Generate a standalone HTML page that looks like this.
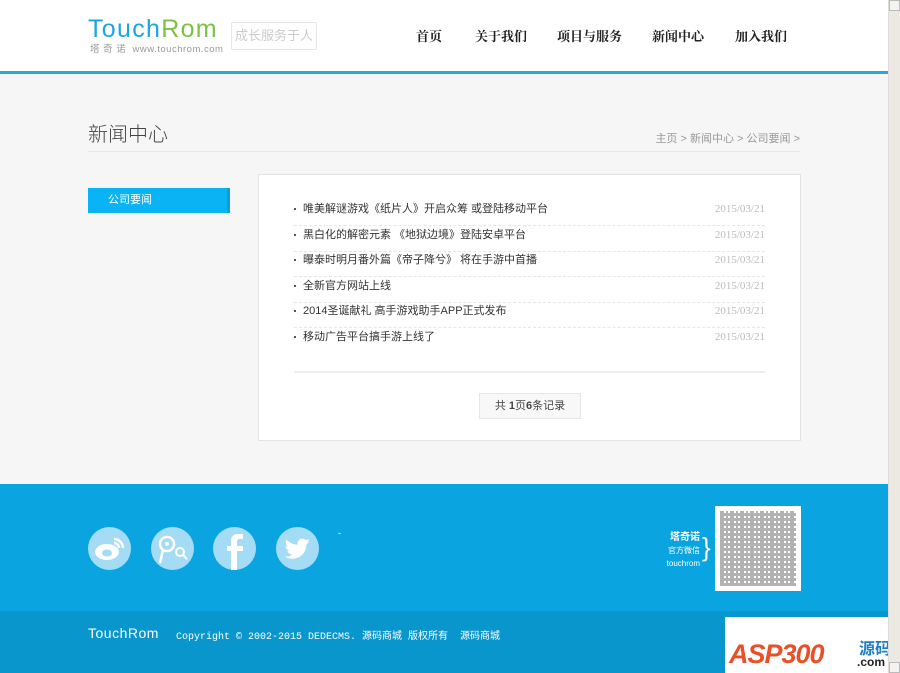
<!DOCTYPE html>
<html><head><meta charset="utf-8"><style>
*{margin:0;padding:0;box-sizing:border-box}
body{width:900px;height:673px;overflow:hidden;background:#f6f6f6;font-family:"Liberation Sans","Noto Sans CJK SC",sans-serif;position:relative}
.page{position:absolute;left:0;top:0;width:888px;height:673px}
.hdr{position:absolute;left:0;top:0;width:888px;background:#fff;border-bottom:3px solid #29a8dc;height:74px}
.logo{position:absolute;left:88px;top:16px;font-size:25px;letter-spacing:1.3px;line-height:26px}
.logo .a{color:#1aa6e0}.logo .b{color:#7cc242}
.sub{position:absolute;left:90px;top:41px;font-size:9.5px;color:#999;letter-spacing:0.5px}
.slogan{position:absolute;left:231px;top:22px;width:86px;height:28px;border:1px solid #e6e6e6;border-radius:2px;color:#ccc;font-size:13px;line-height:26px;text-align:center}
.nav{position:absolute;top:26px;font-size:13px;font-weight:bold;color:#222;font-family:"Noto Serif CJK SC",serif}
.title{position:absolute;left:88px;top:118px;font-size:20px;color:#444;font-weight:300}
.bc{position:absolute;right:88px;top:130px;font-size:11px;color:#999}
.hl{position:absolute;left:88px;top:151px;width:712px;height:1px;background:#e6e6e6}
.side{position:absolute;left:88px;top:188px;width:142px;height:25px;background:#0ab4f4;border-right:3px solid #0a9fd6;color:#fff;font-size:11px;line-height:25px;padding-left:20px}
.box{position:absolute;left:258px;top:174px;width:543px;height:267px;background:#fff;border:1px solid #e3e3e3}
.li{position:absolute;left:35px;width:471px;height:26px;border-bottom:1px dashed #e6e6e6;font-size:11px;color:#333;line-height:18px}
.li span{position:absolute;right:0;top:0;color:#bbb;font-family:"Liberation Serif",serif}
.li:before{content:"";position:absolute;left:0;top:8px;width:2px;height:2px;background:#555}
.li b{font-weight:normal;margin-left:9px}
.sl{position:absolute;left:35px;top:196px;width:471px;height:2px;background:#eee}
.pg{position:absolute;left:220px;top:218px;width:102px;height:26px;border:1px solid #e6e6e6;background:#f8f8f8;font-size:11px;color:#444;line-height:24px;text-align:center}
.ft{position:absolute;left:0;top:484px;width:888px;height:127px;background:#0aa4e0}
.ft2{position:absolute;left:0;top:611px;width:888px;height:62px;background:#0896cd}
.ic{position:absolute;top:527px;width:43px;height:43px;border-radius:50%;background:#a5dcf5}
.cp{position:absolute;left:176px;top:627px;font-size:10px;color:#fff;font-family:"Liberation Mono","Noto Sans CJK SC",monospace}
.sb{position:absolute;left:888px;top:0;width:12px;height:673px;background:#ece9e3;border-left:1px solid #ddd}
.sb i{position:absolute;left:0;width:11px;height:11px;background:#f4f3ee;border:1px solid #bbb}
.qr{position:absolute;left:715px;top:506px;width:86px;height:85px;background:#fff;padding:5px}
.qr div{width:76px;height:75px;background:repeating-linear-gradient(90deg,#aaa 0 4px,#fff 4px 6px,#aaa 6px 8px,#fff 8px 10px),repeating-linear-gradient(0deg,#aaa 0 3px,#fff 3px 5px);background-blend-mode:darken;opacity:.9}
</style></head><body><div class="page">
<div class="hdr">
<div class="logo"><span class="a">Touch</span><span class="b">Rom</span></div>
<div class="sub">塔 奇 诺 &nbsp;www.touchrom.com</div>
<div class="slogan">成长服务于人</div>
<div class="nav" style="left:416px">首页</div>
<div class="nav" style="left:475px">关于我们</div>
<div class="nav" style="left:557px">项目与服务</div>
<div class="nav" style="left:652px">新闻中心</div>
<div class="nav" style="left:735px">加入我们</div>
</div>
<div class="title">新闻中心</div>
<div class="bc">主页 &gt; 新闻中心 &gt; 公司要闻 &gt;</div>
<div class="hl"></div>
<div class="side">公司要闻</div>
<div class="box">
<div class="li" style="top:25px"><b>唯美解谜游戏《纸片人》开启众筹 或登陆移动平台</b><span>2015/03/21</span></div>
<div class="li" style="top:51px"><b>黑白化的解密元素 《地狱边境》登陆安卓平台</b><span>2015/03/21</span></div>
<div class="li" style="top:76px"><b>曝泰时明月番外篇《帝子降兮》 将在手游中首播</b><span>2015/03/21</span></div>
<div class="li" style="top:102px"><b>全新官方网站上线</b><span>2015/03/21</span></div>
<div class="li" style="top:127px"><b>2014圣诞献礼 高手游戏助手APP正式发布</b><span>2015/03/21</span></div>
<div class="li" style="top:153px;border:none"><b>移动广告平台搞手游上线了</b><span>2015/03/21</span></div>
<div class="sl"></div>
<div class="pg">共 <b>1</b>页<b>6</b>条记录</div>
</div>
<div class="ft"></div>
<div class="ic" style="left:88px"><svg width="43" height="43"><ellipse cx="19" cy="25" rx="12" ry="8" fill="#fff"/><ellipse cx="19" cy="26" rx="5" ry="3.5" fill="#a5dcf5"/><path d="M26 12a9 9 0 0 1 9 9M26 16a5 5 0 0 1 5 5" stroke="#fff" stroke-width="2.5" fill="none"/></svg></div>
<div class="ic" style="left:151px"><svg width="43" height="43"><circle cx="16" cy="17" r="7" stroke="#fff" stroke-width="2.5" fill="none"/><circle cx="16" cy="17" r="2" fill="#fff"/><path d="M12 23l-3 13" stroke="#fff" stroke-width="2.5"/><circle cx="29" cy="25" r="4" stroke="#fff" stroke-width="2" fill="none"/><path d="M32 28l4 4" stroke="#fff" stroke-width="2"/></svg></div>
<div class="ic" style="left:213px"><svg width="43" height="43"><path d="M24 43V24h6v-5h-6v-4c0-2 1-3 3-3h3V7h-5c-5 0-7 3-7 7v5h-4v5h4v19z" fill="#fff"/></svg></div>
<div class="ic" style="left:276px"><svg width="43" height="43"><path d="M34 14c-1 .5-2 .8-3 1 1-.7 2-1.700 2-3-1 .6-2 1-3 1.200a5 5 0 0 0-8.500 4.500C17 17.500 13 15.500 10.500 12.500c-1.500 2.500-.5 5.500 1.500 7-.8 0-1.600-.3-2.300-.6 0 2.500 1.800 4.500 4 5-.7.2-1.500.2-2.200.1.6 2 2.500 3.400 4.600 3.500-2 1.600-4.600 2.400-7.300 2.100 2.200 1.400 4.800 2.200 7.600 2.200 9 0 14-7.500 14-14v-.6c1-.7 1.800-1.500 2.500-2.500z" fill="#fff"/></svg></div>
<div style="position:absolute;left:338px;top:528px;color:#fff;font-size:9px">-</div>
<div style="position:absolute;left:650px;top:531px;width:50px;text-align:right;color:#fff;font-size:8px;line-height:13px"><b style="font-size:10px">塔奇诺</b><br>官方微信<br>touchrom</div>
<div style="position:absolute;left:702px;top:532px;color:#fff;font-size:26px;line-height:30px;font-weight:100">}</div>
<div class="qr"><div></div></div>
<div class="ft2"></div>
<div style="position:absolute;left:88px;top:625px;color:#fff;font-size:14px;letter-spacing:.5px">TouchRom</div>
<div class="cp">Copyright © 2002-2015 DEDECMS. 源码商城 版权所有 &nbsp;源码商城</div>
<div style="position:absolute;left:725px;top:617px;width:170px;height:56px;background:#fff;overflow:hidden"><div style="position:absolute;left:4px;top:22px;font:italic bold 27px 'Liberation Sans',sans-serif;color:#e8502a;letter-spacing:-1px">ASP300</div><div style="position:absolute;left:134px;top:18px;font:bold 16px 'Noto Sans CJK SC',sans-serif;color:#1f7fc6">源码</div><div style="position:absolute;left:132px;top:38px;font:bold 12px 'Liberation Sans',sans-serif;color:#222">.com</div></div>
</div>
<div class="sb"><i style="top:0"></i><i style="bottom:0"></i></div>
</body></html>
